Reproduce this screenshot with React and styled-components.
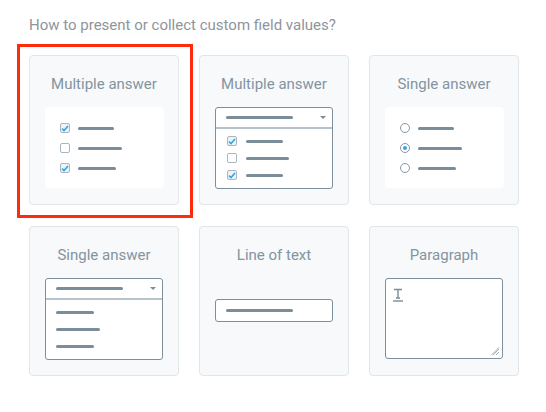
import React from 'react'
import styled, { createGlobalStyle } from 'styled-components'

const GlobalStyle = createGlobalStyle`
  body {
    margin: 0;
    background: #fff;
    font-family: Roboto, "Liberation Sans", sans-serif;
  }
`

const Page = styled.div`
  padding: 16px 29px 0;
`

const Question = styled.div`
  font-size: 15px;
  line-height: 18px;
  color: #8e959b;
  margin-bottom: 21px;
`

const Grid = styled.div`
  display: grid;
  grid-template-columns: repeat(3, 150px);
  column-gap: 20px;
  row-gap: 21px;
`

const Card = styled.div`
  position: relative;
  box-sizing: border-box;
  width: 150px;
  height: 150px;
  background: #f7f9fa;
  border: 1px solid #e1e6e9;
  border-radius: 4px;
  display: flex;
  flex-direction: column;
  align-items: center;
  padding-top: 19px;

  &::after {
    content: '';
    display: ${p => (p.selected ? 'block' : 'none')};
    position: absolute;
    left: -13px;
    top: -12px;
    right: -15px;
    bottom: -14px;
    border: 3px solid #ff2b0c;
    pointer-events: none;
  }
`

const Title = styled.div`
  font-size: 15px;
  line-height: 18px;
  color: #8394a1;
  margin-bottom: 14px;
`

const Panel = styled.div`
  box-sizing: border-box;
  width: 119px;
  height: 81px;
  background: #fff;
  border-radius: 4px;
  display: flex;
  flex-direction: column;
  gap: 10px;
  padding: 16px 0 0 15px;
`

const Row = styled.div`
  display: flex;
  align-items: center;
  height: 10px;
  gap: ${p => p.gap || 8}px;
`

const Bar = styled.div`
  width: ${p => p.w}px;
  height: 3px;
  border-radius: 2px;
  background: #7b8d99;
`

const Check = styled.div`
  box-sizing: border-box;
  width: 10px;
  height: 10px;
  border: 1px solid #a9b6bf;
  border-radius: 2px;
  background: ${p => (p.on ? '#eef3f6' : '#fff')};
  display: flex;
  align-items: center;
  justify-content: center;
`

const Radio = styled.div`
  box-sizing: border-box;
  width: 10px;
  height: 10px;
  border: 1px solid #8797a3;
  border-radius: 50%;
  display: flex;
  align-items: center;
  justify-content: center;
  &::after {
    content: '';
    width: 4px;
    height: 4px;
    border-radius: 50%;
    background: ${p => (p.on ? '#2ea6e6' : 'transparent')};
  }
`

const Box = styled.div`
  position: relative;
  box-sizing: border-box;
  width: 118px;
  height: ${p => p.h}px;
  margin-top: ${p => p.mt || 0}px;
  background: #fff;
  border: 1px solid #7d8f9b;
  border-radius: 3px;
`

const DropHead = styled.div`
  display: flex;
  align-items: center;
  justify-content: space-between;
  height: 19px;
  padding: 0 6px 0 10px;
  border-bottom: 2px solid #b7c3ca;
`

const Caret = styled.div`
  width: 0;
  height: 0;
  border-left: 3px solid transparent;
  border-right: 3px solid transparent;
  border-top: 3px solid #7b8d99;
`

const DropList = styled.div`
  display: flex;
  flex-direction: column;
  gap: ${p => p.gap}px;
  padding: ${p => p.pt}px 0 0 ${p => p.pl}px;
`

const InputInner = styled.div`
  display: flex;
  align-items: center;
  height: 100%;
  padding-left: 10px;
`

const TIcon = styled.svg`
  position: absolute;
  left: 7px;
  top: 9px;
`

const Grip = styled.svg`
  position: absolute;
  right: 2px;
  bottom: 2px;
`

const Tick = () => (
  <svg width="8" height="7" viewBox="0 0 8 7">
    <path d="M1 3.6 L3 5.5 L7 1" fill="none" stroke="#2ea6e6" strokeWidth="1.6" />
  </svg>
)

const CheckRow = ({ on, w, gap }) => (
  <Row gap={gap}>
    <Check on={on}>{on && <Tick />}</Check>
    <Bar w={w} />
  </Row>
)

export default function App() {
  return (
    <Page>
      <GlobalStyle />
      <Question>How to present or collect custom field values?</Question>
      <Grid>
        <Card selected>
          <Title>Multiple answer</Title>
          <Panel>
            <CheckRow on w={36} />
            <CheckRow w={44} />
            <CheckRow on w={38} />
          </Panel>
        </Card>

        <Card>
          <Title>Multiple answer</Title>
          <Box h={82}>
            <DropHead>
              <Bar w={67} />
              <Caret />
            </DropHead>
            <DropList gap={7} pt={7} pl={11}>
              <CheckRow on w={37} gap={9} />
              <CheckRow w={43} gap={9} />
              <CheckRow on w={37} gap={9} />
            </DropList>
          </Box>
        </Card>

        <Card>
          <Title>Single answer</Title>
          <Panel>
            <Row>
              <Radio />
              <Bar w={36} />
            </Row>
            <Row>
              <Radio on />
              <Bar w={44} />
            </Row>
            <Row>
              <Radio />
              <Bar w={38} />
            </Row>
          </Panel>
        </Card>

        <Card>
          <Title>Single answer</Title>
          <Box h={82}>
            <DropHead>
              <Bar w={67} />
              <Caret />
            </DropHead>
            <DropList gap={14} pt={11} pl={10}>
              <Bar w={38} />
              <Bar w={44} />
              <Bar w={38} />
            </DropList>
          </Box>
        </Card>

        <Card>
          <Title>Line of text</Title>
          <Box h={23} mt={21}>
            <InputInner>
              <Bar w={67} />
            </InputInner>
          </Box>
        </Card>

        <Card>
          <Title>Paragraph</Title>
          <Box h={81}>
            <TIcon width="10" height="14" viewBox="0 0 10 14">
              <path d="M1 1.5 H9 M5 1.5 V10 M3 10 H7" fill="none" stroke="#7b8d99" strokeWidth="1.4" />
              <path d="M0 13 H10" stroke="#7b8d99" strokeWidth="1.4" />
            </TIcon>
            <Grip width="9" height="9" viewBox="0 0 9 9">
              <path d="M8 2 L2 8 M8 5 L5 8 M8 0.5 L0.5 8" fill="none" stroke="#9aa8b2" strokeWidth="0.9" />
            </Grip>
          </Box>
        </Card>
      </Grid>
    </Page>
  )
}
